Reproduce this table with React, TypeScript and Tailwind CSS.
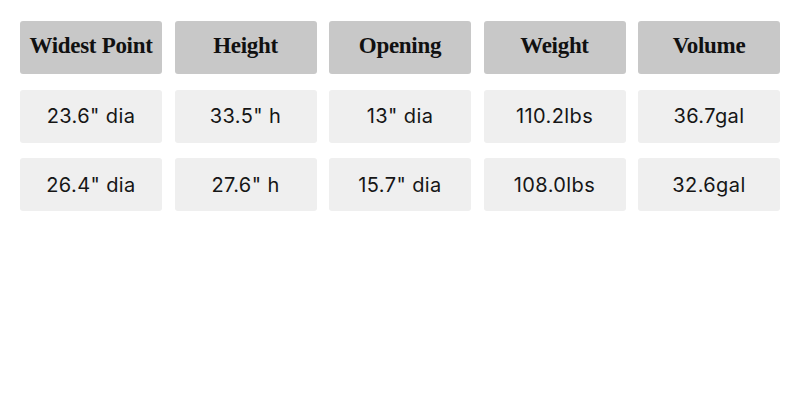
import React from "react";

const headers = ["Widest Point", "Height", "Opening", "Weight", "Volume"];
const rows = [
  ['23.6" dia', '33.5" h', '13" dia', "110.2lbs", "36.7gal"],
  ['26.4" dia', '27.6" h', '15.7" dia', "108.0lbs", "32.6gal"],
];

export default function App() {
  return (
    <div className="w-[800px] h-[400px] bg-white px-5 pt-[21px]">
      <div className="grid grid-cols-5 gap-x-[12.5px] gap-y-[15.5px]">
        {headers.map((h) => (
          <div
            key={h}
            className="h-[53px] rounded-[3px] bg-[#c8c8c8] flex items-center justify-center pb-[3px] text-[23px] font-bold text-[#111] tracking-[-0.3px] font-['Liberation_Serif',serif]"
          >
            {h}
          </div>
        ))}
        {rows.flat().map((c, i) => (
          <div
            key={i}
            className="h-[53px] rounded-[3px] bg-[#efefef] flex items-center justify-center text-[20px] font-normal text-[#161616] tracking-[0.4px] font-['Inter',sans-serif]"
          >
            {c}
          </div>
        ))}
      </div>
    </div>
  );
}
